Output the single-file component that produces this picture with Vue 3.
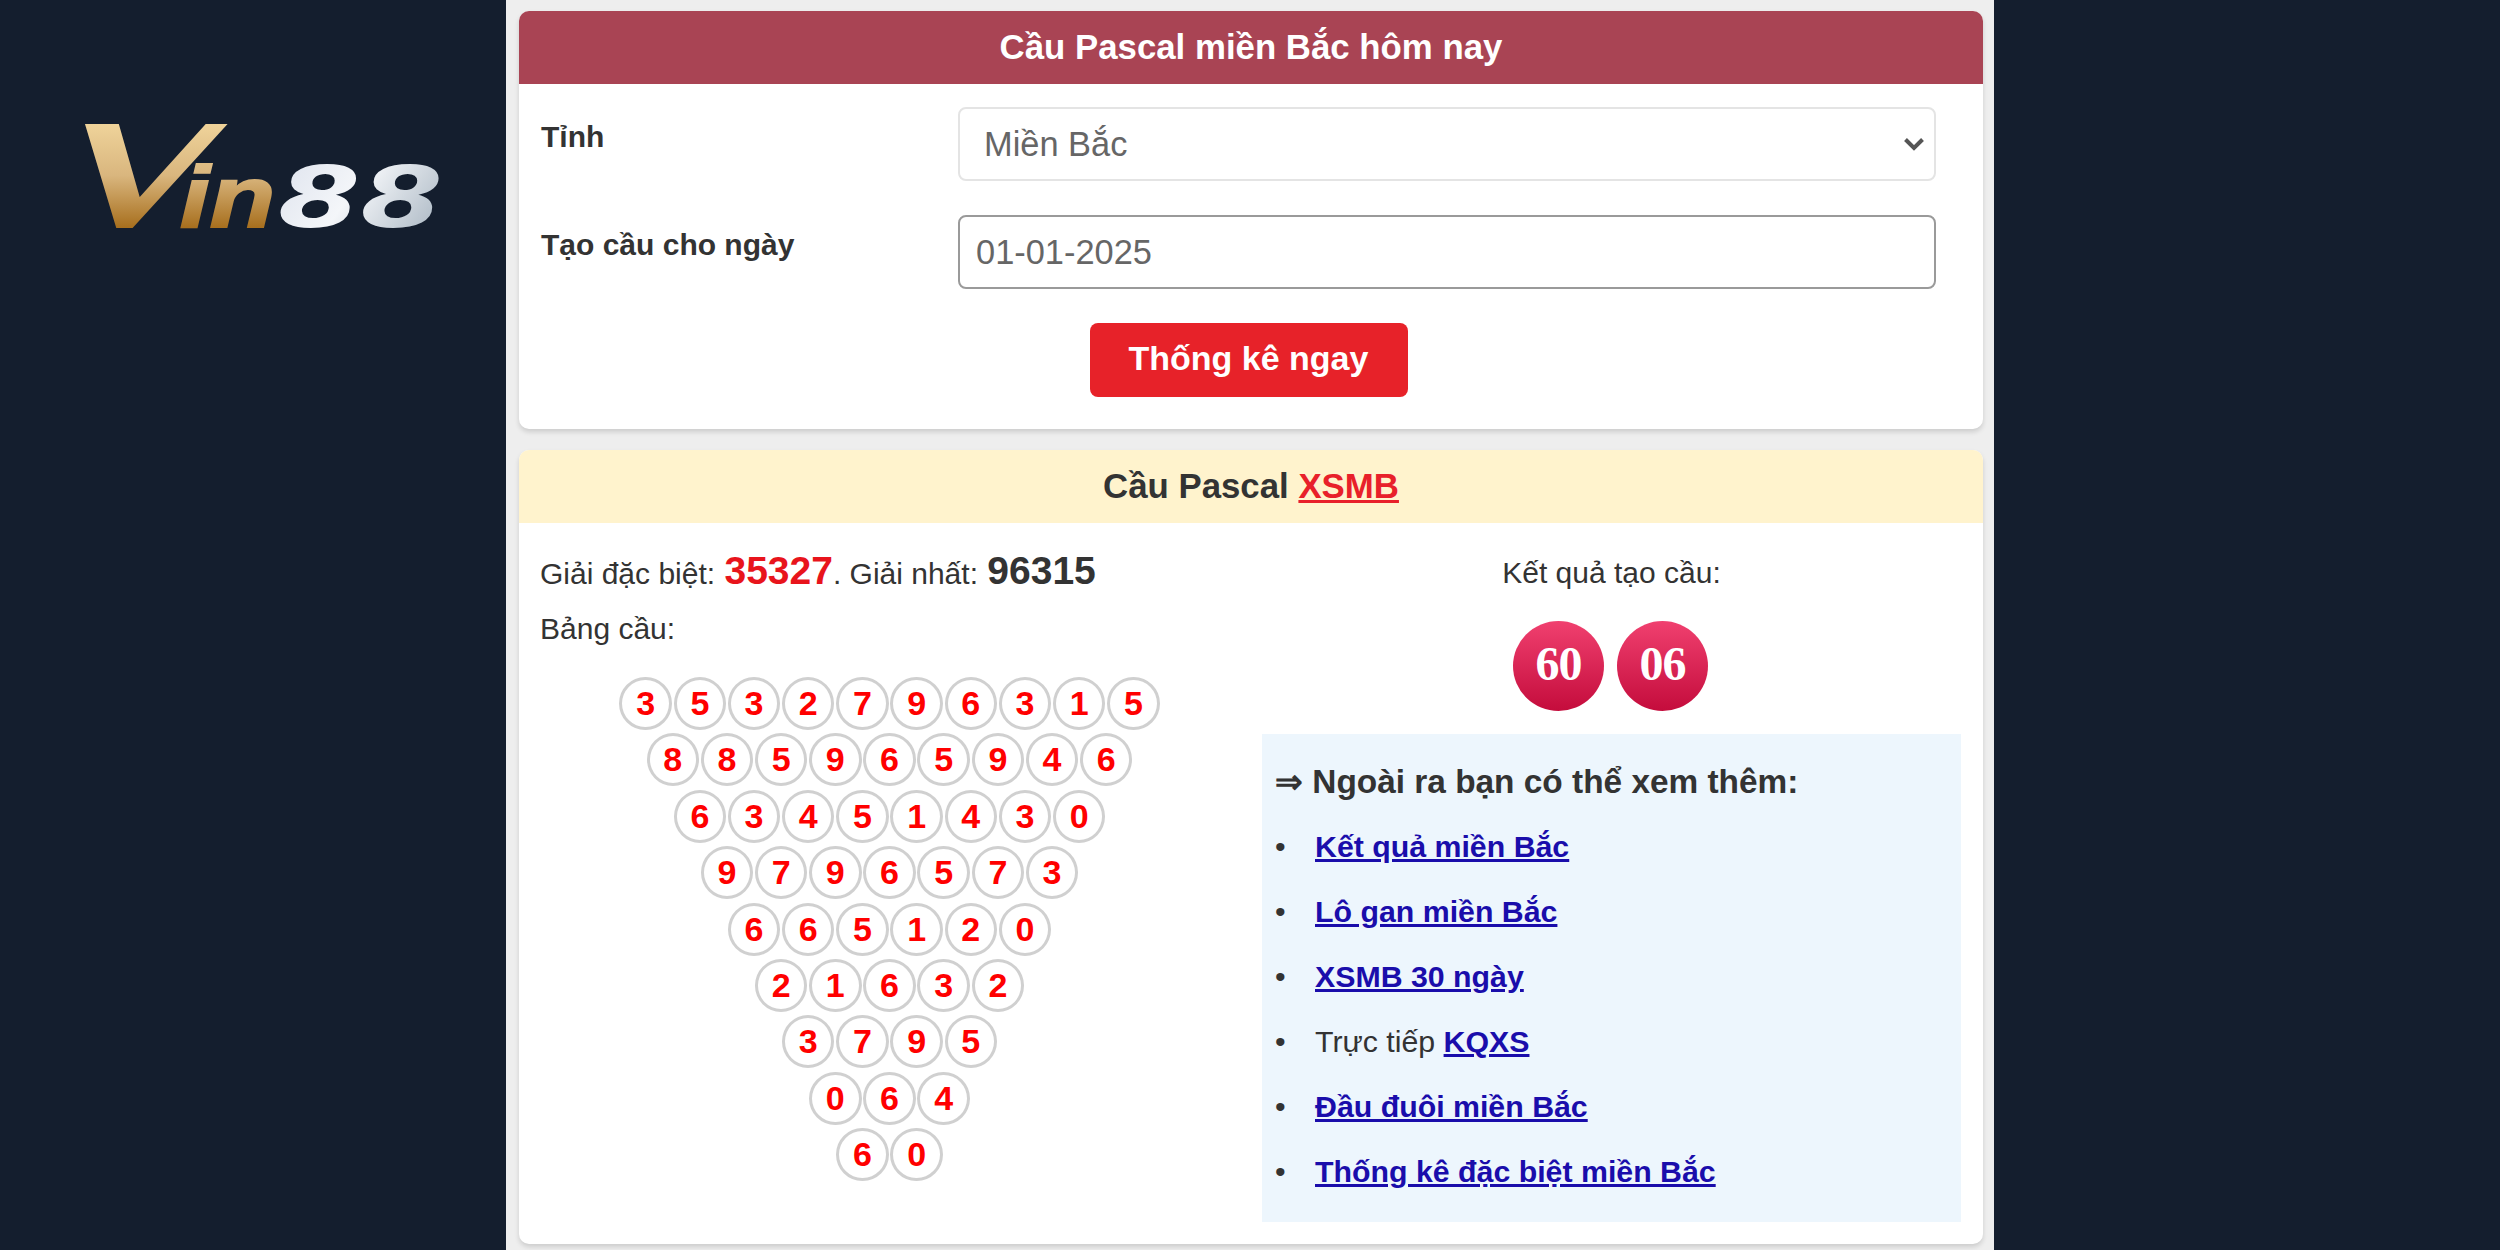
<script setup>
import { ref } from "vue";

const province = ref("Miền Bắc");
const day = ref("01-01-2025");

// Pascal triangle, each row comes from the one above
const rows = [
  [3, 5, 3, 2, 7, 9, 6, 3, 1, 5],
  [8, 8, 5, 9, 6, 5, 9, 4, 6],
  [6, 3, 4, 5, 1, 4, 3, 0],
  [9, 7, 9, 6, 5, 7, 3],
  [6, 6, 5, 1, 2, 0],
  [2, 1, 6, 3, 2],
  [3, 7, 9, 5],
  [0, 6, 4],
  [6, 0],
];

const results = ["60", "06"];
</script>

<template>
  <div class="page">
    <aside class="side">
      <svg class="logo" width="400" height="200" viewBox="-20 -70 400 200">
        <defs>
          <linearGradient id="gold" gradientUnits="userSpaceOnUse" x1="0" y1="-103" x2="0" y2="0">
            <stop offset="0" stop-color="#efd39a" />
            <stop offset="0.5" stop-color="#d9b67e" />
            <stop offset="1" stop-color="#a8701f" />
          </linearGradient>
          <linearGradient id="silver" gradientUnits="userSpaceOnUse" x1="0" y1="-62" x2="117" y2="0">
            <stop offset="0" stop-color="#dfe4ee" />
            <stop offset="0.45" stop-color="#f4f6f9" />
            <stop offset="1" stop-color="#a9b6c2" />
          </linearGradient>
          <clipPath id="vclip">
            <rect x="2" y="4" width="146" height="104" />
          </clipPath>
        </defs>
        <g clip-path="url(#vclip)">
          <text
            class="logo-v"
            transform="matrix(1.45 0 -0.31 1 -49 107)"
            fill="url(#gold)"
            stroke="url(#gold)"
            stroke-width="5"
          >V</text>
        </g>
        <text class="logo-in" transform="translate(98 107) scale(1.23 1)" fill="url(#gold)" stroke="url(#gold)" stroke-width="2">in</text>
        <text class="logo-num" transform="translate(196 107) scale(1.41 1)" fill="url(#silver)">88</text>
      </svg>
    </aside>

    <main class="main">
      <section class="card">
        <h2 class="card-title red">Cầu Pascal miền Bắc hôm nay</h2>
        <form class="form" @submit.prevent>
          <label class="label">Tỉnh</label>
          <div class="select-wrap">
            <select v-model="province" class="select">
              <option>Miền Bắc</option>
              <option>Miền Trung</option>
              <option>Miền Nam</option>
            </select>
            <svg class="chevron" width="22" height="14" viewBox="0 0 22 14">
              <path d="M2.5 2.5 L11 11 L19.5 2.5" fill="none" stroke="#555" stroke-width="4" />
            </svg>
          </div>
          <label class="label">Tạo cầu cho ngày</label>
          <input v-model="day" class="input" type="text" />
          <button class="btn" type="submit">Thống kê ngay</button>
        </form>
      </section>

      <section class="card">
        <h2 class="card-title yellow">Cầu Pascal <a href="#" class="red-link">XSMB</a></h2>
        <div class="columns">
          <div class="left">
            <p class="line">
              Giải đặc biệt: <b class="prize hot">35327</b>. Giải nhất: <b class="prize">96315</b>
            </p>
            <p class="line second">Bảng cầu:</p>
            <div class="triangle">
              <div v-for="(row, i) in rows" :key="i" class="tri-row">
                <span v-for="(n, j) in row" :key="j" class="digit">{{ n }}</span>
              </div>
            </div>
          </div>

          <div class="right">
            <p class="line center">Kết quả tạo cầu:</p>
            <div class="balls">
              <span v-for="r in results" :key="r" class="ball">{{ r }}</span>
            </div>
            <div class="more">
              <p class="more-title">⇒ Ngoài ra bạn có thể xem thêm:</p>
              <ul class="links">
                <li><a href="#">Kết quả miền Bắc</a></li>
                <li><a href="#">Lô gan miền Bắc</a></li>
                <li><a href="#">XSMB 30 ngày</a></li>
                <li>Trực tiếp <a href="#">KQXS</a></li>
                <li><a href="#">Đầu đuôi miền Bắc</a></li>
                <li><a href="#">Thống kê đặc biệt miền Bắc</a></li>
              </ul>
            </div>
          </div>
        </div>
      </section>
    </main>

    <div class="side-right"></div>
  </div>
</template>

<style>
html,
body {
  background: #141e2e;
}
</style>

<style scoped>
.page {
  display: flex;
  height: 1250px;
  overflow: hidden;
  background: #141e2e;
  font-family: "Liberation Sans", Arial, sans-serif;
  color: #333;
}
.side {
  width: 506px;
  flex: none;
  padding: 50px 0 0 62px;
  box-sizing: border-box;
}
.logo {
  display: block;
}
.logo-v {
  font: 400 174px "Liberation Serif", serif;
}
.logo-in {
  font: italic 700 87px "Liberation Sans", sans-serif;
}
.logo-num {
  font: italic 700 84px "DejaVu Sans", sans-serif;
}
.main {
  width: 1488px;
  flex: none;
  box-sizing: border-box;
  padding: 11px 11px 0 13px;
  background: #eeeeee;
  display: flex;
  flex-direction: column;
  gap: 21px;
}
.side-right {
  flex: 1;
}
.card {
  background: #fff;
  border-radius: 10px;
  box-shadow: 0 3px 5px rgba(0, 0, 0, 0.14);
  overflow: hidden;
}
.card-title {
  margin: 0;
  height: 73px;
  line-height: 71px;
  text-align: center;
  font-size: 34.8px;
  font-weight: 700;
}
.red {
  background: #a94454;
  color: #fff;
}
.yellow {
  background: #fff3cd;
  color: #333;
}
.red-link {
  color: #e8202a;
}
.form {
  display: grid;
  grid-template-columns: 418px 978px;
  row-gap: 34px;
  padding: 23px 48px 32px 21px;
}
.label {
  font-size: 30px;
  font-weight: 700;
  line-height: 60px;
  padding-left: 1px;
}
.select-wrap {
  position: relative;
}
.select {
  display: block;
  width: 100%;
  height: 74px;
  box-sizing: border-box;
  appearance: none;
  background: #fff;
  border: 2px solid #e4e4e4;
  border-radius: 8px;
  padding: 0 0 0 24px;
  font: 34.4px "Liberation Sans", Arial, sans-serif;
  color: #666;
}
.chevron {
  position: absolute;
  right: 11px;
  top: 30px;
}
.input {
  display: block;
  width: 100%;
  height: 74px;
  box-sizing: border-box;
  background: #fff;
  border: 2px solid #9a9a9a;
  border-radius: 8px;
  padding: 0 0 0 16px;
  font: 34.4px "Liberation Sans", Arial, sans-serif;
  color: #666;
}
.btn {
  grid-column: 1 / -1;
  justify-self: center;
  margin-left: 21px;
  width: 318px;
  height: 74px;
  border: 0;
  border-radius: 8px;
  padding-bottom: 4px;
  background: #e72229;
  color: #fff;
  font: 700 34px "Liberation Sans", Arial, sans-serif;
}
.columns {
  display: grid;
  grid-template-columns: 696px 699px;
  column-gap: 26px;
  padding: 24px 22px 22px 21px;
}
.line {
  margin: 0;
  font-size: 30px;
  line-height: 48px;
}
.second {
  margin-top: 7px;
}
.center {
  text-align: center;
  padding-top: 2px;
  margin-bottom: -2px;
}
.prize {
  font-size: 39px;
  margin-left: 1px;
}
.hot {
  color: #e8141c;
}
.triangle {
  margin-top: 24px;
  padding-left: 3px;
  display: flex;
  flex-direction: column;
  gap: 3.4px;
}
.tri-row {
  display: flex;
  justify-content: center;
  gap: 1.8px;
}
.digit {
  width: 52.4px;
  height: 53px;
  box-sizing: border-box;
  border: 3.5px solid #d0d0d0;
  border-radius: 50%;
  display: flex;
  align-items: center;
  justify-content: center;
  color: #f00;
  font-size: 34px;
  font-weight: 700;
}
.balls {
  display: flex;
  justify-content: center;
  gap: 13px;
  margin-top: 26px;
  padding-right: 2px;
}
.ball {
  width: 91px;
  height: 90px;
  box-sizing: border-box;
  padding-bottom: 6px;
  border-radius: 50%;
  background: linear-gradient(to bottom, #f0406f, #c40c3c);
  color: #fff;
  display: flex;
  align-items: center;
  justify-content: center;
  font: 700 48px "Liberation Serif", serif;
  letter-spacing: -1px;
}
.more {
  margin-top: 23px;
  background: #edf6fd;
  height: 488px;
  box-sizing: border-box;
  padding: 26px 13px 0;
}
.more-title {
  margin: 0;
  font-size: 33.4px;
  font-weight: 700;
  line-height: 44px;
}
.links {
  margin: 22px 0 0;
  padding: 0;
  list-style: none;
  font-size: 30.3px;
}
.links li {
  height: 65px;
  line-height: 42px;
}
.links li::before {
  content: "•";
  display: inline-block;
  width: 40px;
}
.links a {
  color: #1a0dab;
  font-weight: 700;
}
</style>
